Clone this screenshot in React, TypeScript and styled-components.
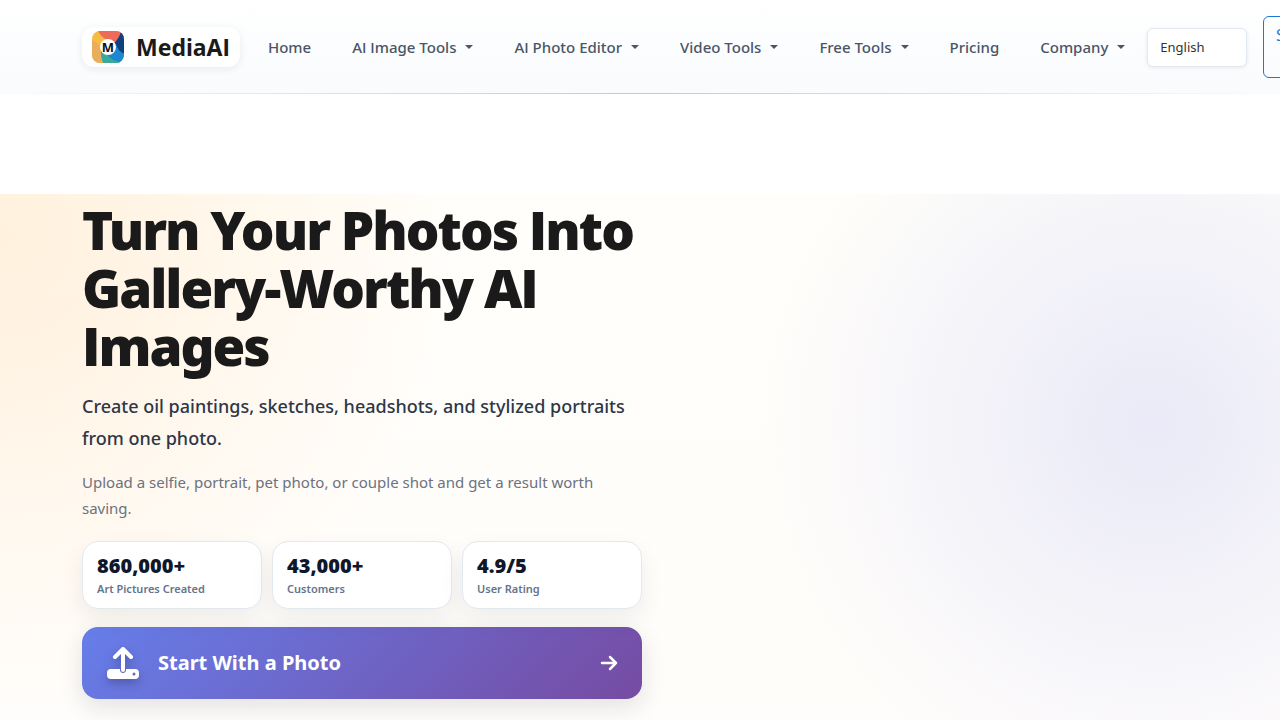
import React from 'react';
import styled, { createGlobalStyle } from 'styled-components';

const GlobalStyle = createGlobalStyle`
  *, *::before, *::after { box-sizing: border-box; }
  html { overflow-x: hidden; }
  body {
    margin: 0;
    overflow-x: hidden;
    background: #fff;
    color: #1a1a1a;
    font-family: 'Noto Sans', sans-serif;
    font-feature-settings: 'ss02', 'ss03', 'ss04', 'cv01';
    font-size: 16px;
    line-height: 24px;
  }
  button, select { font-feature-settings: inherit; }
`;

const Header = styled.header`
  position: relative;
  padding: 16px 0;
  background: linear-gradient(180deg, #ffffff 0%, #f9fbfd 100%);
  &::after {
    content: '';
    position: absolute;
    left: 0;
    right: 0;
    bottom: 0;
    height: 1px;
    background: linear-gradient(90deg, transparent, rgba(0, 0, 0, 0.2), transparent);
  }
`;

const Container = styled.div`
  width: 100%;
  max-width: 1140px;
  margin: 0 auto;
  padding: 0 12px;
`;

const NavRow = styled(Container)`
  display: flex;
  align-items: center;
`;

const Brand = styled.a`
  display: flex;
  flex: none;
  align-items: center;
  gap: 12px;
  height: 40px;
  padding: 0 10px;
  border-radius: 12px;
  background: #fff;
  box-shadow: 0 2px 8px rgba(15, 23, 42, 0.08);
  color: #1a1a1a;
  font-size: 23px;
  font-weight: 700;
  line-height: 32px;
  text-decoration: none;
`;

const NavList = styled.ul`
  display: flex;
  flex: none;
  gap: 1px;
  margin: 0;
  padding: 0 2px 0 8px;
  list-style: none;
`;

const NavLink = styled.a`
  display: flex;
  align-items: center;
  gap: 9px;
  padding: 8px 20px;
  color: #4a5568;
  font-size: 15px;
  font-weight: 500;
  text-decoration: none;
  white-space: nowrap;
`;

const Caret = styled.span`
  border: 4px solid transparent;
  border-top-color: currentColor;
  border-bottom: 0;
`;

const LanguageSelect = styled.select`
  flex: none;
  width: 100px;
  height: 39px;
  padding: 0 12px;
  appearance: none;
  border: 1px solid #e2e8f0;
  border-radius: 6px;
  background: #fff;
  box-shadow: 0 1px 4px rgba(15, 23, 42, 0.08);
  color: #333;
  font-family: inherit;
  font-size: 13px;
  line-height: 20px;
`;

const SignIn = styled.button`
  flex: none;
  width: 58px;
  margin-left: 16px;
  padding: 6px 10px;
  border: 1px solid #1f75d8;
  border-radius: 6px;
  background: transparent;
  color: #1f75d8;
  font-family: inherit;
  font-size: 16px;
  line-height: 24px;
`;

const Hero = styled.main`
  margin-top: 100px;
  min-height: 560px;
  padding: 7px 0 20px;
  background:
    radial-gradient(circle 390px at 90% 231px, rgba(85, 100, 230, 0.13), rgba(85, 100, 230, 0)),
    radial-gradient(ellipse 450px 470px at 0 40px, rgba(255, 165, 50, 0.15), rgba(255, 175, 50, 0)),
    linear-gradient(180deg, #fffefa, #fffdfb);
`;

const Copy = styled.div`
  max-width: 560px;
`;

const Title = styled.h1`
  margin: 0;
  font-size: 53px;
  font-weight: 900;
  letter-spacing: -2px;
  line-height: 58px;
`;

const Lead = styled.p`
  margin: 15px 0 0;
  color: #2d3748;
  font-size: 18px;
  font-weight: 500;
  line-height: 32px;
`;

const Note = styled.p`
  margin: 15px 0 0;
  color: #6b7280;
  font-size: 15px;
  line-height: 26px;
`;

const Stats = styled.dl`
  display: grid;
  grid-template-columns: repeat(3, 1fr);
  gap: 10px;
  margin: 20px 0 0;
`;

const Stat = styled.div`
  display: flex;
  flex-direction: column-reverse;
  gap: 2px;
  padding: 12px 14px 10px;
  border: 1px solid #e2e8f0;
  border-radius: 16px;
  background: #fff;
  box-shadow: 0 10px 24px rgba(15, 23, 42, 0.07);
`;

const StatLabel = styled.dt`
  color: #64748b;
  font-size: 11px;
  font-weight: 600;
  line-height: 18px;
`;

const StatValue = styled.dd`
  margin: 0;
  color: #0f172a;
  font-size: 20px;
  font-weight: 900;
  line-height: 24px;
`;

const Cta = styled.button`
  display: flex;
  align-items: center;
  gap: 18px;
  width: 100%;
  height: 72px;
  margin-top: 18px;
  padding: 0 24px;
  border: 0;
  border-radius: 16px;
  background: linear-gradient(135deg, #667eea 0%, #764ba2 100%);
  box-shadow: 0 8px 24px rgba(15, 23, 42, 0.12);
  color: #fff;
  font-family: inherit;
  font-size: 20px;
  font-weight: 700;
  line-height: 28px;
  text-align: left;
`;

const CtaLabel = styled.span`
  flex: 1;
`;

const UploadIcon = styled.svg`
  filter: drop-shadow(0 4px 5px rgba(0, 0, 0, 0.25));
`;

const menu = [
  { label: 'Home' },
  { label: 'AI Image Tools', dropdown: true },
  { label: 'AI Photo Editor', dropdown: true },
  { label: 'Video Tools', dropdown: true },
  { label: 'Free Tools', dropdown: true },
  { label: 'Pricing' },
  { label: 'Company', dropdown: true },
];

const stats = [
  { value: '860,000+', label: 'Art Pictures Created' },
  { value: '43,000+', label: 'Customers' },
  { value: '4.9/5', label: 'User Rating' },
];

function Logo() {
  return (
    <svg width="32" height="32" viewBox="0 0 32 32" aria-hidden="true">
      <defs>
        <clipPath id="tile"><rect width="32" height="32" rx="8" /></clipPath>
      </defs>
      <g clipPath="url(#tile)">
        <rect width="32" height="32" fill="#f6bd45" />
        <path d="M6 0H29Q28 7 24 13L18 9Q11 9 6 0Z" fill="#ee6a59" />
        <path d="M29 0H32V23Q24 20 22 12Q27 8 29 0Z" fill="#123f7d" />
        <path d="M24 13Q26 20 32 23V32H26Q17 28 13 22Q22 23 24 13Z" fill="#1e88cf" />
        <path d="M9 18Q14 27 29 32H11Q8 25 9 18Z" fill="#3aa99a" />
        <path d="M0 9Q6 12 9 15Q7 24 11 32H0Z" fill="#e9ad5c" />
        <circle cx="16" cy="16" r="8" fill="#fff" />
      </g>
      <text x="16" y="21" textAnchor="middle" fontFamily="Noto Sans, sans-serif" fontSize="13" fontWeight="700" fill="#111">M</text>
    </svg>
  );
}

export default function App() {
  return (
    <>
      <GlobalStyle />
      <Header>
        <NavRow as="nav">
          <Brand href="#"><Logo />MediaAI</Brand>
          <NavList>
            {menu.map((item) => (
              <li key={item.label}>
                <NavLink href="#">{item.label}{item.dropdown && <Caret />}</NavLink>
              </li>
            ))}
          </NavList>
          <LanguageSelect aria-label="Language"><option>English</option></LanguageSelect>
          <SignIn>Sign In</SignIn>
        </NavRow>
      </Header>
      <Hero>
        <Container>
          <Copy>
            <Title>Turn Your Photos Into Gallery-Worthy AI Images</Title>
            <Lead>Create oil paintings, sketches, headshots, and stylized portraits from one photo.</Lead>
            <Note>Upload a selfie, portrait, pet photo, or couple shot and get a result worth saving.</Note>
            <Stats>
              {stats.map((stat) => (
                <Stat key={stat.label}>
                  <StatLabel>{stat.label}</StatLabel>
                  <StatValue>{stat.value}</StatValue>
                </Stat>
              ))}
            </Stats>
            <Cta>
              <UploadIcon width="34" height="34" viewBox="0 0 34 34" aria-hidden="true">
                <path d="M17 3V24M9 11L17 3L25 11" fill="none" stroke="#fff" strokeWidth="4" strokeLinecap="round" strokeLinejoin="round" />
                <path fillRule="evenodd" d="M5 23H14V24C14 28 20 28 20 24V23H29Q33 23 33 27V29Q33 33 29 33H5Q1 33 1 29V27Q1 23 5 23ZM28 26.500A1.500 1.500 0 1 0 28 29.500A1.500 1.500 0 1 0 28 26.500Z" fill="#fff" />
              </UploadIcon>
              <CtaLabel>Start With a Photo</CtaLabel>
              <svg width="18" height="16" viewBox="0 0 18 16" aria-hidden="true">
                <path d="M2 8H16M10 2L16 8L10 14" fill="none" stroke="#fff" strokeWidth="2.500" strokeLinecap="round" strokeLinejoin="round" />
              </svg>
            </Cta>
          </Copy>
        </Container>
      </Hero>
    </>
  );
}
